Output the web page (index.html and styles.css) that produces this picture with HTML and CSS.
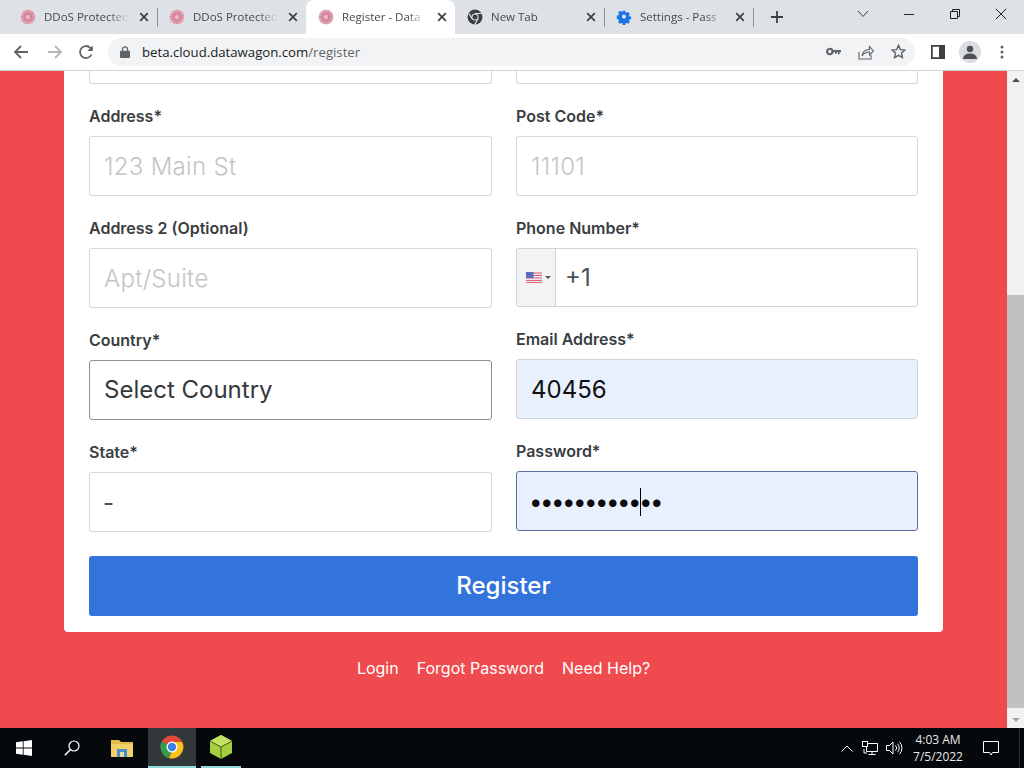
FILE: index.html
```html
<!DOCTYPE html>
<html lang="en">
<head>
<meta charset="utf-8">
<title>Register - DataWagon</title>
<link rel="stylesheet" href="styles.css">
</head>
<body>
<svg class="defs" width="0" height="0">
  <defs>
    <radialGradient id="favfill">
      <stop offset="0" stop-color="#e8b4c0"/>
      <stop offset=".55" stop-color="#d98fa3"/>
      <stop offset="1" stop-color="#f0ccd4"/>
    </radialGradient>
    <symbol id="fav" viewBox="0 0 16 16">
      <circle cx="8" cy="8" r="7.600" fill="url(#favfill)"/>
      <circle cx="8" cy="8" r="6.300" fill="none" stroke="#c9688a" stroke-opacity=".75" stroke-width="1.800" stroke-dasharray="1 1.400"/>
      <circle cx="8" cy="8" r="3.500" fill="none" stroke="#c05c78" stroke-opacity=".75" stroke-width="1.400" stroke-dasharray="1 1"/>
      <circle cx="8" cy="8" r="1.500" fill="#eabdc8"/>
    </symbol>
    <symbol id="x" viewBox="0 0 10 10">
      <path d="M1.200 1.200l7.600 7.600M8.800 1.200L1.200 8.800" fill="none" stroke="#3c4043" stroke-width="1.700"/>
    </symbol>
    <symbol id="chrome" viewBox="0 0 16 16">
      <circle cx="8" cy="8" r="7.500" fill="#3c4043"/>
      <path d="M8 4.500h6.600M5 9.800L1.800 4.200M11 9.800l-3.300 5.700" stroke="#dee1e6" stroke-width="1.200" fill="none"/>
      <circle cx="8" cy="8" r="3.600" fill="#dee1e6"/>
      <circle cx="8" cy="8" r="2.500" fill="#3c4043"/>
    </symbol>
  </defs>
</svg>

<header class="tabstrip">
  <div class="tab">
    <svg class="favicon"><use href="#fav"/></svg>
    <span class="tab-title">DDoS Protected</span>
    <svg class="tab-close"><use href="#x"/></svg>
    <i class="tab-sep"></i>
  </div>
  <div class="tab">
    <svg class="favicon"><use href="#fav"/></svg>
    <span class="tab-title">DDoS Protected</span>
    <svg class="tab-close"><use href="#x"/></svg>
  </div>
  <div class="tab tab-active">
    <svg class="favicon"><use href="#fav"/></svg>
    <span class="tab-title">Register - Data</span>
    <svg class="tab-close"><use href="#x"/></svg>
  </div>
  <div class="tab">
    <svg class="favicon"><use href="#chrome"/></svg>
    <span class="tab-title">New Tab</span>
    <svg class="tab-close"><use href="#x"/></svg>
    <i class="tab-sep"></i>
  </div>
  <div class="tab">
    <svg class="favicon" viewBox="0 0 16 16">
      <path fill="#1a73e8" fill-rule="evenodd" d="M6.600 1h2.800l.4 2 1.300.6 1.800-1 2 2-1.100 1.700.6 1.400 2 .4v2.800l-2 .4-.6 1.400 1.100 1.700-2 2-1.800-1-1.300.5-.4 2H6.600l-.4-2-1.300-.5-1.800 1-2-2 1.100-1.700-.6-1.400-2-.4V6.700l2-.4.6-1.400L1.100 3.200l2-2 1.800 1 1.300-.6zM8 5.600a2.400 2.400 0 1 0 0 4.800 2.400 2.400 0 0 0 0-4.800z" transform="translate(1.200 .8) scale(.85)"/>
    </svg>
    <span class="tab-title">Settings - Pass</span>
    <svg class="tab-close"><use href="#x"/></svg>
    <i class="tab-sep"></i>
  </div>
  <svg class="new-tab" viewBox="0 0 12 12"><path d="M6 0v12M0 6h12" stroke="#3c4043" stroke-width="1.800"/></svg>
  <div class="window-controls">
    <svg class="win-btn win-list" viewBox="0 0 12 8"><path d="M1 1l5 5.500L11 1" fill="none" stroke="#3c4043"/></svg>
    <svg class="win-btn" viewBox="0 0 12 12"><path d="M1 6.500h10" stroke="#202124"/></svg>
    <svg class="win-btn" viewBox="0 0 12 12"><path d="M1.500 3.500h7v7h-7zM3.500 3.500v-2h7v7h-2" fill="none" stroke="#202124"/></svg>
    <svg class="win-btn" viewBox="0 0 12 12"><path d="M.8.800l10.400 10.400M11.200.800L.8 11.200" stroke="#202124"/></svg>
  </div>
</header>

<nav class="toolbar">
  <svg class="tool-icon back" viewBox="0 0 16 16"><path d="M15 8H2.500M8 2L2 8l6 6" fill="none" stroke="#5f6368" stroke-width="1.800"/></svg>
  <svg class="tool-icon fwd" viewBox="0 0 16 16"><path d="M1 8h12.500M8 2l6 6-6 6" fill="none" stroke="#b4b7bb" stroke-width="1.800"/></svg>
  <svg class="tool-icon reload" viewBox="0 0 16 16"><path d="M13.500 10.500A6 6 0 1 1 12.300 3.800L14 5.500" fill="none" stroke="#5f6368" stroke-width="1.800"/><path d="M14.800 1.500v5.500H9.300z" fill="#5f6368"/></svg>
  <div class="omnibox">
    <svg class="lock" viewBox="0 0 10 12"><path d="M2.500 5V3.300a2.500 2.500 0 0 1 5 0V5" fill="none" stroke="#5f6368" stroke-width="1.300"/><rect y="4.800" width="10" height="7.200" rx="1" fill="#5f6368"/></svg>
    <span class="url">beta.cloud.datawagon.com<span class="url-path">/register</span></span>
    <svg class="omni-key" viewBox="0 0 16 9"><path fill-rule="evenodd" fill="#5f6368" d="M4 .5a4 4 0 1 1-3.700 5.500A4 4 0 0 1 4 .5zm0 2.200a1.800 1.800 0 1 0 0 3.600 1.800 1.800 0 0 0 0-3.600z"/><path fill="#5f6368" d="M7.500 2.800H16v2.600h-1.500v2h-1.800v-2h-1.200v1.500H9.700V5.400H7.500z"/></svg>
    <svg class="omni-share" viewBox="0 0 16 16"><path d="M1 8v7h12v-4" fill="none" stroke="#5f6368" stroke-width="1.100"/><path d="M4 12c.5-4 3.500-6.500 7.500-6.500V2.500L15.500 7l-4 4V8c-3 0-5.500 1-7.500 4z" fill="none" stroke="#5f6368" stroke-width="1.100"/></svg>
    <svg class="omni-star" viewBox="0 0 16 16"><path d="M8 1.500l2 4.500 4.800.5-3.600 3.200 1 4.800L8 12.100 3.800 14.500l1-4.800L1.200 6.500 6 6z" fill="none" stroke="#5f6368" stroke-width="1.500"/></svg>
  </div>
  <svg class="side-icon" viewBox="0 0 14 14"><path fill-rule="evenodd" fill="#3c4043" d="M0 0h14v14H0zM1.700 1.700v10.600H8V1.700z"/></svg>
  <div class="avatar"><svg viewBox="0 0 14 14" width="14" height="14"><circle cx="7" cy="4" r="3.200" fill="#4d5156"/><path d="M0 14c0-3.500 3-5.500 7-5.500s7 2 7 5.500z" fill="#4d5156"/></svg></div>
  <svg class="menu-icon" viewBox="0 0 4 14"><circle cx="2" cy="2" r="1.500" fill="#5f6368"/><circle cx="2" cy="7" r="1.500" fill="#5f6368"/><circle cx="2" cy="12" r="1.500" fill="#5f6368"/></svg>
</nav>

<div class="viewport">
  <main class="page">
    <form class="card">
      <div class="form-grid">
        <div class="stub"></div>
        <div class="stub"></div>
        <div class="col">
          <div class="field">
            <div class="label">Address*</div>
            <div class="input placeholder">123 Main St</div>
          </div>
          <div class="field">
            <div class="label">Address 2 (Optional)</div>
            <div class="input placeholder">Apt/Suite</div>
          </div>
          <div class="field">
            <div class="label">Country*</div>
            <div class="input select">Select Country</div>
          </div>
          <div class="field">
            <div class="label">State*</div>
            <div class="input dash">-</div>
          </div>
        </div>
        <div class="col">
          <div class="field">
            <div class="label">Post Code*</div>
            <div class="input placeholder">11101</div>
          </div>
          <div class="field">
            <div class="label">Phone Number*</div>
            <div class="input phone">
              <div class="flag-box">
                <svg class="flag" viewBox="0 0 16 11">
                  <rect width="16" height="11" fill="#e8e8f0"/>
                  <path d="M0 1h16M0 3.500h16M0 6h16M0 8.500h16M0 10.500h16" stroke="#e0627c" stroke-width="1"/>
                  <rect width="7.500" height="6" fill="#5a6fb8"/>
                </svg>
                <i class="caret-down"></i>
              </div>
              <span class="phone-code">+1</span>
            </div>
          </div>
          <div class="field">
            <div class="label">Email Address*</div>
            <div class="input autofill">40456</div>
          </div>
          <div class="field">
            <div class="label">Password*</div>
            <div class="input autofill focus">
              <span class="dots">••••••••••••</span>
              <i class="text-caret"></i>
            </div>
          </div>
        </div>
      </div>
      <div class="submit">Register</div>
    </form>
    <div class="links">
      <span>Login</span>
      <span>Forgot Password</span>
      <span>Need Help?</span>
    </div>
  </main>
  <aside class="scrollbar">
    <div class="sb-arrow"><i class="sb-up"></i></div>
    <div class="sb-space"></div>
    <div class="sb-thumb"></div>
    <div class="sb-arrow"><i class="sb-down"></i></div>
  </aside>
</div>

<footer class="taskbar">
  <svg class="tb-win" viewBox="0 0 16 16"><path fill="#fff" d="M0 2.300l6.800-1v6.300H0zM7.600 1.200L16 0v7.600H7.600zM0 8.400h6.800v6.300l-6.800-1zM7.600 8.400H16V16l-8.400-1.200z"/></svg>
  <svg class="tb-search" viewBox="0 0 16 16"><circle cx="10" cy="6" r="5" fill="none" stroke="#fff" stroke-width="1.200"/><path d="M6.300 9.700L.8 15.200" stroke="#fff" stroke-width="1.500"/></svg>
  <svg class="tb-folder" viewBox="0 0 22 18">
    <path d="M0 1h8l2 2h12v15H0z" fill="#e8b84a"/>
    <rect y="5" width="22" height="13" fill="#f3cf6a"/>
    <rect x="6" y="10" width="10" height="8" fill="#4b8fc8"/>
    <rect x="9" y="13" width="4" height="5" fill="#e8d9a8"/>
  </svg>
  <div class="tb-chrome">
    <svg viewBox="0 0 24 24" width="24" height="24">
      <circle cx="12" cy="12" r="11.500" fill="#e0483a"/>
      <path d="M12 12L2 6.500A11.500 11.500 0 0 0 9 23.100z" fill="#2f9e4f"/>
      <path d="M12 7h10a11.500 11.500 0 0 1-13 16.100L12 17z" fill="#f5c518"/>
      <circle cx="12" cy="12" r="5.500" fill="#fff"/>
      <circle cx="12" cy="12" r="4.200" fill="#3d7fe6"/>
    </svg>
  </div>
  <div class="tb-cube">
    <svg viewBox="0 0 22 24" width="22" height="24">
      <path d="M11 0l11 6v12l-11 6L0 18V6z" fill="#a4cf3e"/>
      <path d="M11 0l11 6-11 6L0 6z" fill="#c3e263"/>
      <path d="M11 12v12M11 12L0 6M11 12l11-6" stroke="#3f5a12" stroke-width="1" fill="none"/>
    </svg>
  </div>
  <div class="tray">
    <svg class="tray-chev" viewBox="0 0 12 7"><path d="M.5 6.500L6 1l5.500 5.500" fill="none" stroke="#fff"/></svg>
    <svg class="tray-net" viewBox="0 0 16 14"><path d="M4.500 2.500h11v8h-11zM10 10.500v3M6.500 13.500h7" fill="none" stroke="#fff"/><rect x=".5" y=".5" width="5" height="5" fill="#05090c" stroke="#fff"/><path d="M2 8v4h3" fill="none" stroke="#fff"/></svg>
    <svg class="tray-vol" viewBox="0 0 17 14"><path d="M.5 4.500h3L7 1v12L3.500 9.500h-3z" fill="none" stroke="#fff"/><path d="M9.500 4.500a3.500 3.500 0 0 1 0 5M11.500 2.800a6 6 0 0 1 0 8.400M13.500 1a8.500 8.500 0 0 1 0 12" fill="none" stroke="#fff"/></svg>
    <div class="clock"><span>4:03 AM</span><span>7/5/2022</span></div>
    <svg class="tray-note" viewBox="0 0 16 15"><path d="M.5.500h15v11H9.500L8 14l-1.500-2.500h-6z" fill="none" stroke="#fff"/></svg>
    <i class="show-desktop"></i>
  </div>
</footer>
</body>
</html>
```

FILE: styles.css
```css
* { box-sizing: border-box; }
html, body { margin: 0; height: 100%; }
body {
  width: 1024px;
  height: 768px;
  overflow: hidden;
  display: flex;
  flex-direction: column;
  font-family: Inter, "Liberation Sans", sans-serif;
  background: #ef4a4d;
}
.defs { position: absolute; }
svg { display: block; flex: none; }

/* tab strip */
.tabstrip {
  height: 34px;
  flex: none;
  display: flex;
  align-items: center;
  padding-left: 8px;
  background: #dee1e6;
}
.tab {
  position: relative;
  width: 149px;
  height: 34px;
  flex: none;
  display: flex;
  align-items: center;
  padding-left: 12px;
  font: 11.5px "Open Sans", "Liberation Sans", sans-serif;
  color: #45494e;
}
.tab-active {
  background: #fff;
  border-radius: 8px 8px 0 0;
}
.favicon { width: 16px; height: 16px; }
.tab-title {
  width: 84px;
  margin-left: 8px;
  padding-bottom: 2px;
  white-space: nowrap;
  -webkit-mask-image: linear-gradient(90deg, #000 78%, transparent 100%);
  mask-image: linear-gradient(90deg, #000 78%, transparent 100%);
}
.tab-close { width: 10px; height: 10px; margin-left: 11px; }
.tab-sep {
  position: absolute;
  right: -1px;
  top: 8px;
  width: 1px;
  height: 19px;
  background: #8d9094;
}
.new-tab { width: 12px; height: 12px; margin-left: 18px; }
.window-controls {
  margin-left: auto;
  display: flex;
  align-items: center;
  align-self: flex-start;
  height: 28px;
  gap: 34px;
  padding-right: 17px;
}
.win-btn { width: 12px; height: 12px; }
.win-list { height: 8px; }

/* toolbar */
.toolbar {
  height: 37px;
  flex: none;
  display: flex;
  align-items: center;
  padding: 0 0 1px 13px;
  background: #fff;
  border-bottom: 1px solid #d2d3d5;
}
.tool-icon { width: 16px; height: 16px; }
.back { margin-right: 18px; }
.fwd { margin-right: 15px; }
.reload { margin-right: 14px; }
.omnibox {
  width: 807px;
  height: 28px;
  border-radius: 14px;
  background: #f1f3f4;
  display: flex;
  align-items: center;
  padding-left: 12px;
}
.lock { width: 10px; height: 12px; }
.url {
  margin-left: 12px;
  font: 13.2px "Open Sans", "Liberation Sans", sans-serif;
  color: #202124;
  white-space: nowrap;
}
.url-path { color: #5f6368; }
.omni-key { width: 15px; height: 9px; margin-left: auto; }
.omni-share { width: 16px; height: 16px; margin-left: 17.5px; }
.omni-star { width: 15px; height: 15px; margin-left: 16.5px; margin-right: 9.5px; }
.side-icon { width: 14px; height: 14px; margin-left: 16px; }
.avatar {
  width: 22px;
  height: 22px;
  margin-left: 14px;
  border-radius: 50%;
  background: #dadce0;
  display: flex;
  align-items: flex-end;
  justify-content: center;
  padding-bottom: 4px;
}
.menu-icon { width: 4px; height: 14px; margin-left: 19px; }

/* page */
.viewport {
  flex: 1;
  min-height: 0;
  display: flex;
  overflow: hidden;
}
.page {
  flex: 1;
  min-width: 0;
  padding: 0 64px;
  background: #ef4a4d;
}
.card {
  width: 879px;
  padding: 0 25px 16px;
  background: #fff;
  border-radius: 0 0 4px 4px;
}
.form-grid {
  display: grid;
  grid-template-columns: 403px 402px;
  column-gap: 24px;
}
.stub {
  height: 13px;
  margin-bottom: 20px;
  border: 1px solid #d6d8da;
  border-top: 0;
  border-radius: 0 0 3px 3px;
}
.col { display: flex; flex-direction: column; }
.field { margin-bottom: 20px; }
.col .field:last-child { margin-bottom: 0; }
.col:last-child { padding-bottom: 1px; }
.label {
  height: 24px;
  margin-bottom: 8px;
  font-size: 16px;
  font-weight: 600;
  line-height: 24px;
  color: #3a3d41;
}
.input {
  position: relative;
  height: 60px;
  display: flex;
  align-items: center;
  padding: 0 14px;
  border: 1px solid #d6d8da;
  border-radius: 3px;
  font-size: 24px;
  color: #212529;
  background: #fff;
}
.placeholder { color: #c2c5c8; font-weight: 300; letter-spacing: .3px; padding-top: 1px; }
.select { border-color: #8a8f94; color: #33383d; padding-bottom: 2px; }
.dash { color: #495057; padding-left: 13px; }
.phone { height: 59px; padding: 0; border-color: #ced4da; }
.flag-box {
  width: 39px;
  height: 100%;
  display: flex;
  align-items: center;
  gap: 3px;
  padding-left: 9px;
  background: #f3f3f3;
  border-right: 1px solid #ced4da;
  border-radius: 3px 0 0 3px;
}
.flag { width: 16px; height: 11px; }
.caret-down {
  width: 0;
  height: 0;
  border: 3px solid transparent;
  border-top: 3px solid #555;
  border-bottom: 0;
}
.phone-code { margin-left: 9px; color: #495057; }
.autofill { background: #e8f0fe; color: #111; border-color: #ced4da; }
.focus { border-color: #5b6f9e; }
.dots { margin-left: -2px; font-size: 24px; letter-spacing: -2.5px; color: #0b0b0b; }
.text-caret {
  position: absolute;
  left: 123px;
  top: 16px;
  width: 1px;
  height: 28px;
  background: #000;
}
.submit {
  height: 60px;
  margin-top: 24px;
  padding-bottom: 2px;
  display: flex;
  align-items: center;
  justify-content: center;
  border-radius: 3px;
  background: #3273dc;
  color: #fff;
  font-size: 24px;
  font-weight: 500;
}
.links {
  margin-top: 24px;
  display: flex;
  justify-content: center;
  gap: 18px;
  font-size: 16px;
  line-height: 24px;
  color: #fff;
}

/* scrollbar */
.scrollbar {
  width: 17px;
  flex: none;
  display: flex;
  flex-direction: column;
  background: #f1f1f1;
}
.sb-arrow {
  height: 17px;
  flex: none;
  display: flex;
  align-items: center;
  justify-content: center;
}
.sb-up, .sb-down {
  width: 0;
  height: 0;
  border-left: 4px solid transparent;
  border-right: 4px solid transparent;
}
.sb-up { border-bottom: 4px solid #505050; }
.sb-down { border-top: 4px solid #a3a3a3; }
.sb-space { height: 207px; flex: none; }
.sb-thumb { flex: 1; margin-bottom: 3px; background: #c1c1c1; }

/* taskbar */
.taskbar {
  height: 40px;
  flex: none;
  display: flex;
  align-items: center;
  background: #05090c;
}
.tb-win { width: 16px; height: 16px; margin-left: 16px; }
.tb-search { width: 16px; height: 16px; margin-left: 32px; }
.tb-folder { width: 22px; height: 18px; margin-left: 31px; }
.tb-chrome {
  width: 48px;
  height: 40px;
  margin-left: 15px;
  display: flex;
  align-items: center;
  justify-content: center;
  background: #33393b;
  border-bottom: 2px solid #8fd8dc;
}
.tb-cube {
  width: 40px;
  height: 40px;
  margin-left: 5px;
  display: flex;
  align-items: center;
  justify-content: center;
  border-bottom: 2px solid #8fd8dc;
}
.tray {
  margin-left: auto;
  display: flex;
  align-items: center;
  height: 40px;
}
.tray-chev { width: 12px; height: 7px; margin-right: 9px; }
.tray-net { width: 16px; height: 14px; margin-right: 8.5px; }
.tray-vol { width: 17px; height: 14px; }
.clock {
  width: 70px;
  display: flex;
  flex-direction: column;
  align-items: center;
  font: 12px/17px "Open Sans", "Liberation Sans", sans-serif;
  color: #e8e8e8;
}
.tray-note { width: 16px; height: 15px; margin-left: 10px; }
.show-desktop {
  width: 1px;
  height: 40px;
  margin-left: 20px;
  margin-right: 4px;
  background: #2a2e31;
}
```
